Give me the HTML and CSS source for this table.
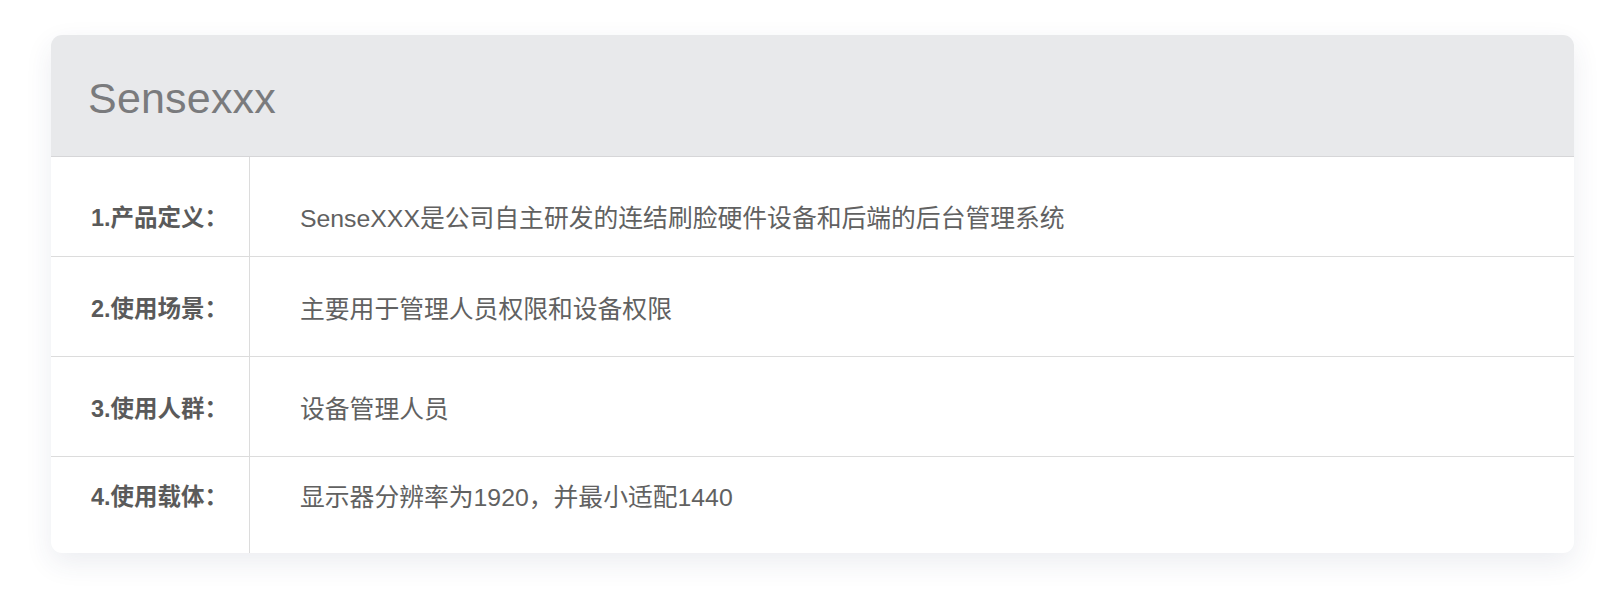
FILE: index.html
```html
<!DOCTYPE html>
<html lang="zh-CN">
<head>
    <meta charset="UTF-8">
    <meta name="viewport" content="width=device-width, initial-scale=1.0">
    <title>Sensexxx 产品说明</title>
    <link rel="stylesheet" href="styles.css">
</head>
<body>
    <div class="card">
        <header class="card-header">
            <h1>Sensexxx</h1>
        </header>

        <div class="info-list">
            <div class="info-row first">
                <div class="info-label">1.产品定义：</div>
                <div class="info-value">SenseXXX是公司自主研发的连结刷脸硬件设备和后端的后台管理系统</div>
            </div>
            <div class="info-row">
                <div class="info-label">2.使用场景：</div>
                <div class="info-value">主要用于管理人员权限和设备权限</div>
            </div>
            <div class="info-row">
                <div class="info-label">3.使用人群：</div>
                <div class="info-value">设备管理人员</div>
            </div>
            <div class="info-row last">
                <div class="info-label">4.使用载体：</div>
                <div class="info-value">显示器分辨率为1920，并最小适配1440</div>
            </div>
        </div>
    </div>
</body>
</html>
```

FILE: styles.css
```css
body {
    margin: 0;
    padding: 35px 47px 40px 51px;
    background-color: #fff;
    font-family: 'Liberation Sans', 'Noto Sans CJK SC', sans-serif;
    color: #666;
}
.card {
    height: 518px;
    background-color: #fff;
    border-radius: 11px;
    box-shadow: 0 10px 28px rgba(40, 60, 100, 0.09);
    overflow: hidden;
}
.card-header {
    height: 116px;
    display: flex;
    align-items: center;
    padding: 5px 0 0 37px;
    background-color: #e8e9eb;
    border-bottom: 1px solid #d6d6d8;
}
.card-header h1 {
    margin: 0;
    font-size: 43px;
    font-weight: normal;
    color: #7a7b7d;
    letter-spacing: 0.2px;
}
.info-row {
    display: grid;
    grid-template-columns: 199px 1fr;
    height: 99px;
    border-bottom: 1px solid #dcdcdc;
}
.info-row.first {
    padding-top: 18px;
    height: 81px;
}
.info-row.last {
    border-bottom: none;
    height: 96px;
}
.info-label,
.info-value {
    display: flex;
    align-items: center;
}
.info-label {
    padding-left: 40px;
    font-size: 23.5px;
    font-weight: bold;
    color: #5a5a5a;
    border-right: 1px solid #dcdcdc;
}
.info-value {
    padding-left: 50px;
    font-size: 24.8px;
    color: #616161;
}
.info-row.first .info-label {
    margin-top: -18px;
    padding-top: 18px;
}
.info-row.last .info-label,
.info-row.last .info-value {
    padding-bottom: 20px;
}
```
